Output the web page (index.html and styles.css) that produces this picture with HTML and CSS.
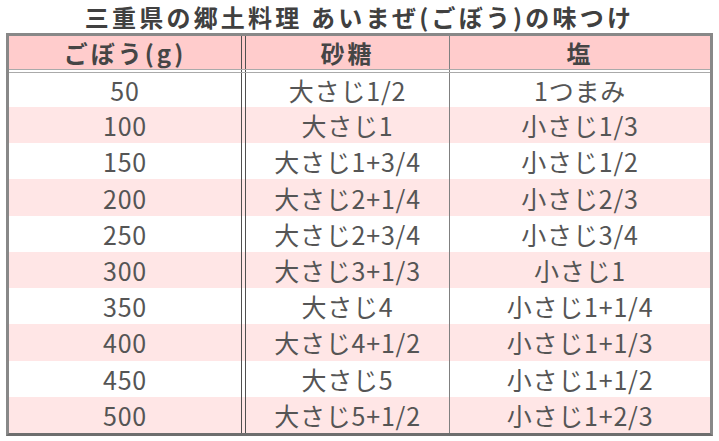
FILE: index.html
```html
<!DOCTYPE html>
<html lang="ja">
<head>
<meta charset="utf-8">
<link rel="stylesheet" href="styles.css">
</head>
<body>
<div class="title">三重県の郷土料理 あいまぜ(ごぼう)の味つけ</div>
<div class="table">
  <div class="row head"><div class="c c1">ごぼう(g)</div><div class="c c2">砂糖</div><div class="c c3">塩</div></div>
  <div class="row sep"><div class="c c1"></div><div class="c c2"></div><div class="c c3"></div></div>
  <div class="row first"><div class="c c1">50</div><div class="c c2">大さじ1/2</div><div class="c c3">1つまみ</div></div>
  <div class="row alt"><div class="c c1">100</div><div class="c c2">大さじ1</div><div class="c c3">小さじ1/3</div></div>
  <div class="row"><div class="c c1">150</div><div class="c c2">大さじ1+3/4</div><div class="c c3">小さじ1/2</div></div>
  <div class="row alt"><div class="c c1">200</div><div class="c c2">大さじ2+1/4</div><div class="c c3">小さじ2/3</div></div>
  <div class="row"><div class="c c1">250</div><div class="c c2">大さじ2+3/4</div><div class="c c3">小さじ3/4</div></div>
  <div class="row alt"><div class="c c1">300</div><div class="c c2">大さじ3+1/3</div><div class="c c3">小さじ1</div></div>
  <div class="row"><div class="c c1">350</div><div class="c c2">大さじ4</div><div class="c c3">小さじ1+1/4</div></div>
  <div class="row alt"><div class="c c1">400</div><div class="c c2">大さじ4+1/2</div><div class="c c3">小さじ1+1/3</div></div>
  <div class="row"><div class="c c1">450</div><div class="c c2">大さじ5</div><div class="c c3">小さじ1+1/2</div></div>
  <div class="row alt"><div class="c c1">500</div><div class="c c2">大さじ5+1/2</div><div class="c c3">小さじ1+2/3</div></div>
</div>
</body>
</html>
```
FILE: styles.css
```css
html, body {
  margin: 0;
  padding: 0;
  background: #ffffff;
}
body {
  font-family: "Noto Sans CJK JP", "Noto Sans", sans-serif;
  color: #555555;
}
.title {
  height: 33px;
  line-height: 33px;
  text-align: center;
  font-size: 24px;
  font-weight: 700;
  letter-spacing: 3.2px;
  color: #404040;
  white-space: nowrap;
}
.table {
  margin-left: 6px;
  width: 707px;
  height: 403px;
  box-sizing: border-box;
  border: 3px solid #888888;
  border-bottom-color: #6e6e6e;
  display: flex;
  flex-direction: column;
}
.row {
  display: grid;
  grid-template-columns: 233px 207px 1fr;
  flex: 1 1 0;
  min-height: 0;
  background: #ffffff;
}
.row.alt {
  background: #ffe6e6;
}
.row.head {
  flex: 0 0 34px;
  background: #ffcccc;
  border-bottom: 1px solid #aaaaaa;
  box-sizing: border-box;
}
.row.sep {
  flex: 0 0 3px;
  border-bottom: 1px solid #aaaaaa;
  box-sizing: border-box;
}
.row.first {
  flex: 0 0 34px;
}
.c {
  display: flex;
  align-items: center;
  justify-content: center;
  font-size: 25px;
  letter-spacing: 0.8px;
  white-space: nowrap;
  overflow: hidden;
}
.c1 {
  border-right: 1px solid #505050;
}
.c2 {
  margin-left: 3px;
  border-left: 1px solid #505050;
}
.c3 {
  border-left: 1px solid #808080;
}
.head .c {
  font-size: 24px;
  font-weight: 700;
  letter-spacing: 3px;
  color: #454545;
}
```
